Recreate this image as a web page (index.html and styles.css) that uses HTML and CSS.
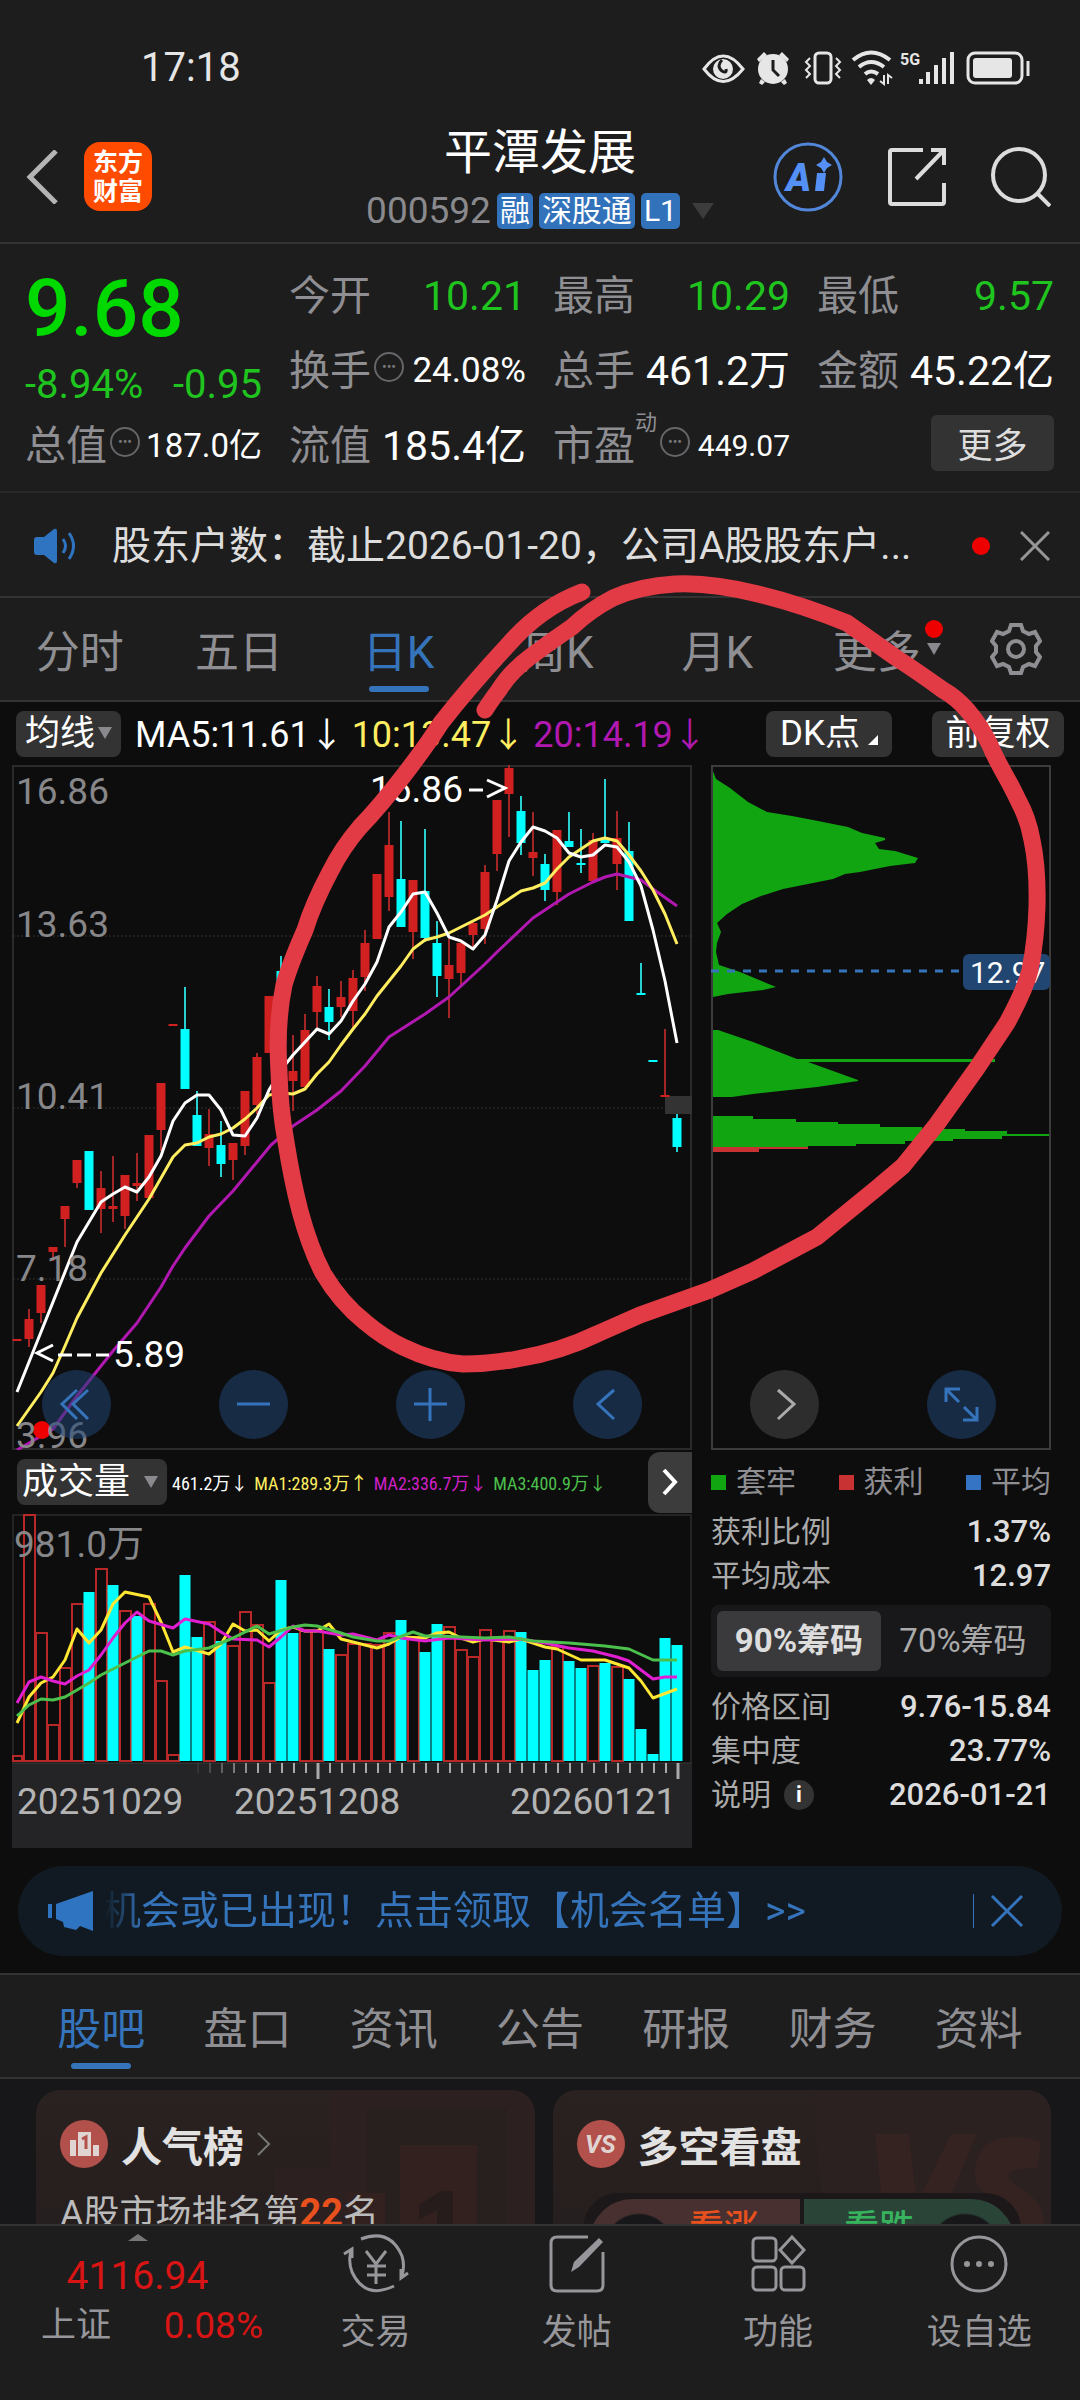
FILE: index.html
```html
<!DOCTYPE html>
<html lang="zh-CN">
<head>
<meta charset="utf-8">
<meta name="viewport" content="width=device-width, initial-scale=1">
<title>平潭发展 000592</title>
<link rel="stylesheet" href="styles.css">
</head>
<body>
<div class="app">
  <div class="status">
    <span class="clock">17:18</span>
    <svg class="status-icons" viewBox="700 46 334 38" width="334" height="38" aria-hidden="true">
      <g fill="none" stroke="#e6e6e6" stroke-width="3">
        <path d="M704 66Q723 40 743 66Q723 91 704 66Z"/>
        <rect x="815" y="50" width="16" height="30" rx="4"/>
        <path d="M810 55l-4 4 4 4-4 4 4 4-4 4M836 55l4 4-4 4 4 4-4 4 4 4" stroke-width="2"/>
        <path d="M853 57Q871 42 890 57M859 64Q871 54 884 64M865 71Q871 66 878 71" stroke-width="4"/>
        <rect x="968" y="50" width="54" height="30" rx="7"/>
        <path d="M1028 58v15" stroke-width="3"/>
        <path d="M884 72v9l-4-3M888 81v-9l4 3" stroke-width="2"/>
      </g>
      <g fill="#e6e6e6">
        <circle cx="723" cy="66" r="10"/>
        <circle cx="773" cy="66" r="15"/>
        <path d="M757 56l7-7 3 3-8 7zM789 56l-7-7-3 3 8 7zM761 76l4 3-3 3-3-2zM785 76l-4 3 3 3 3-2z"/>
        <path d="M871 82l-4-5q4-4 8 0z"/>
        <path d="M919 76h4v5h-4zM926 69h4v12h-4zM934 62h4v19h-4zM942 55h4v26h-4zM950 49h4v32h-4z"/>
        <rect x="973" y="55" width="39" height="20" rx="3"/>
        <text x="900" y="62" font-size="16" font-weight="700">5G</text>
      </g>
      <path d="M773 57v10l6 6M722 57q-6 6 0 11 5 3 4-2" fill="none" stroke="#1d1d1d" stroke-width="3"/>
    </svg>
  </div>

  <header class="header">
    <div class="header-side">
      <button class="icon-btn back" aria-label="返回"><svg viewBox="0 0 32 54" width="32" height="54"><path d="M30 1L4 27l26 26" fill="none" stroke="#b4b4b4" stroke-width="5"/></svg></button>
      <div class="logo"><span>东方</span><span>财富</span></div>
    </div>
    <div class="title">
      <h1>平潭发展</h1>
      <div class="code-row"><span class="code">000592</span><span class="badge">融</span><span class="badge">深股通</span><span class="badge">L1</span><i class="caret-down"></i></div>
    </div>
    <div class="header-side header-right">
      <button class="icon-btn" aria-label="AI"><svg viewBox="2 2 70 70" width="70" height="70"><circle cx="37" cy="37" r="33" fill="none" stroke="#5186d8" stroke-width="3"/><text x="15" y="51" font-size="38" font-weight="900" font-style="italic" fill="#5490f5">A</text><path d="M46 33h9l-2 18h-9zM53 17l3 5 5 3-5 3-3 5-3-5-5-3 5-3z" fill="#5490f5"/></svg></button>
      <button class="icon-btn" aria-label="分享"><svg viewBox="0 0 60 60" width="60" height="60"><path d="M36 3H5q-2 0-2 2v50q0 2 2 2h50q2 0 2-2V36M44 3h13v15M56 4L29 32" fill="none" stroke="#dcdcdc" stroke-width="4"/></svg></button>
      <button class="icon-btn" aria-label="搜索"><svg viewBox="0 0 60 60" width="60" height="60"><circle cx="28" cy="28" r="26" fill="none" stroke="#dcdcdc" stroke-width="4"/><path d="M46 46l13 13" stroke="#dcdcdc" stroke-width="4"/></svg></button>
    </div>
  </header>

  <section class="quote">
    <div class="price-box">
      <strong class="price">9.68</strong>
      <div class="change"><span>-8.94%</span><span>-0.95</span></div>
    </div>
    <div class="cell"><span class="label">今开</span><span class="val green">10.21</span></div>
    <div class="cell"><span class="label">最高</span><span class="val green">10.29</span></div>
    <div class="cell"><span class="label">最低</span><span class="val green">9.57</span></div>
    <div class="cell"><span class="label">换手</span><i class="dots">•••</i><span class="val mid">24.08%</span></div>
    <div class="cell"><span class="label">总手</span><span class="val">461.2万</span></div>
    <div class="cell"><span class="label">金额</span><span class="val">45.22亿</span></div>
    <div class="cell"><span class="label">总值</span><i class="dots">•••</i><span class="val small">187.0亿</span></div>
    <div class="cell"><span class="label">流值</span><span class="val">185.4亿</span></div>
    <div class="cell"><span class="label">市盈</span><sup>动</sup><i class="dots">•••</i><span class="val tiny">449.07</span></div>
    <div class="cell"><button class="more">更多</button></div>
  </section>

  <section class="notice">
    <svg viewBox="0 0 46 36" width="46" height="36" aria-hidden="true"><path d="M1 12q0-3 3-3h7L21 1q3-1 3 2v30q0 3-3 2l-10-8H4q-3 0-3-3z" fill="#2f74c0"/><path d="M30 11q5 7 0 14M36 5q9 13 0 26" fill="none" stroke="#2f74c0" stroke-width="3"/></svg>
    <p>股东户数：截止2026-01-20，公司A股股东户...</p>
    <i class="dot"></i>
    <button class="icon-btn" aria-label="关闭"><svg viewBox="0 0 30 30" width="30" height="30"><path d="M1 1l28 28M29 1L1 29" stroke="#969696" stroke-width="3"/></svg></button>
  </section>

  <nav class="periods">
    <button>分时</button><button>五日</button><button class="active">日K</button><button>周K</button><button>月K</button><button class="period-more">更多<i class="caret-small"></i><i class="dot"></i></button>
    <button class="gear" aria-label="设置"><svg viewBox="0 0 52 52" width="52" height="52"><path d="M21 2h10l2 6 6 3 6-2 5 9-4 5v6l4 5-5 9-6-2-6 3-2 6H21l-2-6-6-3-6 2-5-9 4-5v-6l-4-5 5-9 6 2 6-3z" fill="none" stroke="#8e8e93" stroke-width="4"/><circle cx="26" cy="26" r="8" fill="none" stroke="#8e8e93" stroke-width="4"/></svg></button>
  </nav>

  <main class="market">
    <div class="indicator-bar">
      <button class="chip">均线<i class="caret-small"></i></button>
      <div class="ma-list">
        <span>MA5:11.61<b>↓</b></span>
        <span class="yellow">10:13.47<b>↓</b></span>
        <span class="purple">20:14.19<b>↓</b></span>
      </div>
      <button class="chip dk">DK点<i class="corner"></i></button>
      <button class="chip adjust">前复权</button>
    </div>

    <div class="chart-row">
      <svg class="chart" viewBox="12 765 680 685" role="img" aria-label="日K线图">
        <rect x="13" y="766" width="678" height="683" fill="none" stroke="#2b2b2b" stroke-width="2"/>
        <path d="M13 936H691M13 1108H691M13 1279H691" stroke="#333" stroke-dasharray="2 2"/>
        <rect x="665" y="1096" width="27" height="18" fill="#333"/>
        <path stroke="#a32626" stroke-width="2" fill="none" d="M29 1309V1347M41 1285V1323M53 1248V1261M65 1206V1247M77 1160V1188M101 1171V1233M113 1156V1222M125 1175V1229M137 1153V1201M161 1083V1151M209 1109V1166M233 1143V1180M245 1091V1155M257 1053V1114M293 1035V1111M305 1014V1090M317 976V1028M341 981V1017M353 970V1028M365 930V991M389 812V911M413 880V959M449 939V1018M461 943V985M473 921V947M485 865V944M497 800V871M509 765V837M533 812V876M557 830V905M593 833V883M617 811V890M665 1029V1097"/>
        <path stroke="#d02020" stroke-width="9" fill="none" d="M17 1339V1341M29 1319V1339M41 1285V1313M53 1247V1252M65 1206V1219M77 1160V1183M101 1188V1209M113 1206V1209M125 1175V1216M137 1183V1186M149 1135V1198M161 1083V1130M173 1024V1026M209 1134V1148M233 1143V1160M245 1091V1146M257 1057V1105M269 996V1053M293 1071V1081M305 1030V1087M317 986V1012M341 997V1007M353 978V1011M365 943V977M377 874V939M389 845V897M413 880V932M449 965V979M461 943V973M473 923V935M485 872V929M497 800V854M509 768V794M533 852V858M557 830V892M593 840V881M617 838V864M665 1095V1097"/>
        <path stroke="#26d0d0" stroke-width="2" fill="none" d="M185 987V1029M197 1091V1146M221 1121V1177M281 956V1000M329 989V1040M401 821V927M425 829V942M437 921V997M521 796V855M545 854V901M569 812V847M581 829V873M605 779V843M629 822V921M641 963V995M677 1114V1152"/>
        <path stroke="#00ffff" stroke-width="9" fill="none" d="M89 1151V1210M185 1029V1089M197 1115V1146M221 1145V1164M281 971V1000M329 1007V1022M401 879V927M425 891V938M437 943V976M521 811V843M545 864V890M569 841V847M581 863V865M605 840V843M629 851V921M641 993V995M653 1060V1062M677 1118V1147"/>
        <g fill="none" stroke-width="3" stroke-linejoin="round">
          <path stroke="#b018b0" d="M17 1450L53 1429L77 1396L113 1351L137 1323L149 1305L161 1287L173 1266L185 1248L209 1216L233 1191L257 1162L271 1145L293 1126L317 1110L341 1091L365 1066L389 1037L425 1014L449 997L485 964L497 952L533 918L545 910L569 894L593 882L605 877L617 874L629 877L641 880L653 889L677 906"/>
          <path stroke="#ffee60" d="M17 1426L41 1392L53 1373L65 1346L77 1318L101 1273L125 1235L137 1217L149 1199L161 1178L173 1157L185 1145L197 1143L209 1137L221 1134L233 1128L245 1119L257 1108L269 1095L281 1093L293 1094L305 1089L317 1074L329 1062L341 1045L353 1029L365 1014L377 996L389 981L401 966L413 949L425 940L437 937L449 933L461 927L473 921L485 915L497 907L521 891L533 888L545 883L557 869L569 857L581 849L593 841L605 838L617 841L629 855L641 871L653 890L665 914L677 944"/>
          <path stroke="#ffffff" d="M17 1392L77 1242L101 1202L113 1194L125 1187L137 1192L149 1177L161 1156L173 1121L185 1103L197 1095L209 1095L221 1110L233 1135L245 1136L257 1118L269 1090L281 1070L293 1055L305 1042L317 1029L329 1034L341 1021L353 1001L365 984L377 962L389 927L401 912L413 894L425 892L437 913L449 937L461 941L473 949L485 935L497 900L509 861L521 842L533 827L545 831L557 838L569 853L581 857L593 855L605 845L617 847L629 862L641 886L653 930L665 981L677 1043"/>
        </g>
        <circle cx="42" cy="1430" r="9" fill="#ee0000"/>
        <g class="axis"><text x="16" y="804">16.86</text><text x="16" y="937">13.63</text><text x="16" y="1109">10.41</text><text x="16" y="1281">7.18</text><text x="16" y="1448">3.96</text></g>
        <g class="mark"><text x="113" y="1367">5.89</text><text x="370" y="802">16.86</text></g>
        <path d="M53 1345L37 1353L53 1361M58 1355h14M77 1355h14M96 1355h13M469 790h14M487 780L505 788L487 797" fill="none" stroke="#fff" stroke-width="3"/>
      </svg>
      <svg class="chart" viewBox="711 765 340 685" role="img" aria-label="筹码分布">
        <path fill="#12a512" d="M711 766L716 779L730 788L748 802L767 812L792 816L818 821L848 827L862 833L885 838V840L875 843L879 849L895 851L918 858L915 863L890 866L860 872L845 874L833 879L808 884L783 889L761 896L742 904L727 914L717 923L721 932L717 943L716 952L719 965L740 972L776 987L763 990L728 994L713 997L712 1030H718L753 1042L797 1059H995V1062H808L858 1080V1081L817 1087L753 1094L732 1097H711ZM711 1116H753V1119H796V1122H838V1124H880V1127H922V1129H965V1131H1007V1134H1050V1136H1002V1139H953V1141H905V1144H856V1146H808V1147H711Z"/>
        <path fill="#c83232" d="M711 1147H808V1149H759V1152H711Z"/>
        <rect x="712" y="766" width="338" height="683" fill="none" stroke="#3c3c3c" stroke-width="2"/>
        <path d="M711 971H960" stroke="#3574bb" stroke-width="3" stroke-dasharray="8 8"/>
        <rect x="963" y="954" width="87" height="36" rx="6" fill="#214672"/>
        <text x="970" y="983" font-size="30" fill="#fff">12.97</text>
      </svg>
      <div class="controls">
        <button aria-label="最早"><svg viewBox="0 0 69 69"><path d="M35 20L20 34l15 15M46 20L31 34l15 15"/></svg></button>
        <button aria-label="缩小"><svg viewBox="0 0 69 69"><path d="M18 34h33"/></svg></button>
        <button aria-label="放大"><svg viewBox="0 0 69 69"><path d="M18 34h33M34 18v33"/></svg></button>
        <button aria-label="向左"><svg viewBox="0 0 69 69"><path d="M41 20L25 34l16 15"/></svg></button>
        <button class="muted" aria-label="向右"><svg viewBox="0 0 69 69"><path d="M28 20l16 14-16 15"/></svg></button>
        <button aria-label="全屏"><svg viewBox="0 0 69 69"><path d="M19 32V19h14M20 20l12 12M37 37l13 13M50 37v13H36"/></svg></button>
      </div>
    </div>

    <div class="detail-row">
      <div class="volume">
        <div class="volume-bar">
          <button class="chip">成交量<i class="caret-small"></i></button>
          <div class="vol-values"><span>461.2万↓</span><span class="yellow">MA1:289.3万↑</span><span class="magenta">MA2:336.7万↓</span><span class="lime">MA3:400.9万↓</span></div>
          <button class="next" aria-label="下一个"><svg viewBox="0 0 20 30" width="20" height="30"><path d="M4 3l11 12L4 27" fill="none" stroke="#fff" stroke-width="4"/></svg></button>
        </div>
        <svg class="chart" viewBox="12 1514 680 334" role="img" aria-label="成交量图">
          <defs><linearGradient id="fade" gradientUnits="userSpaceOnUse" x1="190" y1="0" x2="260" y2="0"><stop offset="0" stop-color="#aaa" stop-opacity="0"/><stop offset="1" stop-color="#aaa"/></linearGradient></defs>
          <rect x="12" y="1763" width="680" height="85" fill="#242426"/>
          <rect x="13" y="1515" width="678" height="248" fill="none" stroke="#3a3a3a"/>
          <path fill="none" stroke="#b82828" stroke-width="2" d="M13 1761V1756h9V1761zM24 1761V1515h11V1761zM36 1761V1633h11V1761zM48 1761V1725h11V1761zM60 1761V1668h11V1761zM72 1761V1604h11V1761zM96 1761V1569h11V1761zM120 1761V1611h11V1761zM144 1761V1604h11V1761zM156 1761V1681h11V1761zM168 1761V1755h11V1761zM204 1761V1622h11V1761zM228 1761V1646h11V1761zM240 1761V1612h11V1761zM252 1761V1625h11V1761zM264 1761V1683h11V1761zM300 1761V1631h11V1761zM312 1761V1631h11V1761zM336 1761V1655h11V1761zM348 1761V1644h11V1761zM360 1761V1644h11V1761zM372 1761V1645h11V1761zM384 1761V1633h11V1761zM408 1761V1637h11V1761zM444 1761V1627h11V1761zM456 1761V1650h11V1761zM468 1761V1657h11V1761zM480 1761V1630h11V1761zM492 1761V1637h11V1761zM504 1761V1631h11V1761zM552 1761V1647h11V1761zM588 1761V1666h11V1761zM612 1761V1667h11V1761z"/>
          <path fill="none" stroke="#00ffff" stroke-width="11" d="M89 1761V1592M113 1761V1585M137 1761V1616M185 1761V1575M197 1761V1637M221 1761V1641M281 1761V1580M293 1761V1633M329 1761V1649M401 1761V1620M425 1761V1652M437 1761V1624M521 1761V1632M533 1761V1670M545 1761V1660M569 1761V1661M581 1761V1668M605 1761V1663M629 1761V1679M641 1761V1729M653 1761V1754M665 1761V1638M677 1761V1645"/>
          <g fill="none" stroke-width="3" stroke-linejoin="round">
            <path stroke="#ffe733" d="M17 1723L29 1697L41 1683L53 1677L65 1660L77 1629L89 1643L101 1630L113 1604L125 1592L149 1597L161 1622L173 1652L185 1647L209 1654L221 1644L233 1624L245 1631L257 1630L269 1641L281 1630L293 1627L305 1631L317 1631L329 1624L341 1639L377 1648L389 1644L401 1637L425 1638L437 1633L449 1632L461 1638L473 1642L485 1639L509 1642L521 1639L545 1647L557 1649L581 1660L605 1660L629 1668L641 1681L653 1698L677 1689"/>
            <path stroke="#e01fd0" d="M17 1703L29 1682L41 1677L53 1681L65 1684L77 1676L89 1670L101 1655L113 1638L125 1623L137 1612L149 1621L173 1628L185 1619L209 1624L221 1632L233 1639L257 1640L269 1647L281 1637L293 1626L305 1631L317 1631L341 1635L353 1634L377 1640L389 1635L401 1638L425 1641L449 1638L485 1640L521 1639L545 1643L569 1648L593 1651L617 1657L629 1661L653 1679L665 1677L677 1677"/>
            <path stroke="#4cc04c" d="M17 1716L29 1705L41 1699L53 1700L65 1697L77 1690L89 1683L101 1675L125 1663L149 1651L161 1651L173 1655L185 1651L209 1648L221 1643L233 1638L257 1626L269 1634L293 1627L305 1625L317 1626L341 1633L353 1637L377 1641L389 1641L413 1632L425 1636L437 1636L485 1638L509 1637L533 1641L569 1643L605 1646L629 1649L653 1660L677 1660"/>
          </g>
          <path d="M197 1768H678" stroke="url(#fade)" stroke-width="10" stroke-dasharray="2 10"/>
          <path d="M318 1763V1779M678 1763V1779" stroke="#aaa" stroke-width="3"/>
          <g class="axis"><text x="14" y="1557">981.0万</text></g>
          <g class="dates"><text x="17" y="1814">20251029</text><text x="234" y="1814">20251208</text><text x="510" y="1814">20260121</text></g>
        </svg>
      </div>

      <div class="stats">
        <div class="legend"><span><i class="sw sw-green"></i>套牢</span><span><i class="sw sw-red"></i>获利</span><span><i class="sw sw-blue"></i>平均</span></div>
        <dl>
          <div><dt>获利比例</dt><dd>1.37%</dd></div>
          <div><dt>平均成本</dt><dd>12.97</dd></div>
        </dl>
        <div class="toggle"><button class="on">90%筹码</button><button>70%筹码</button></div>
        <dl>
          <div><dt>价格区间</dt><dd>9.76-15.84</dd></div>
          <div><dt>集中度</dt><dd>23.77%</dd></div>
          <div><dt>说明<i class="info">i</i></dt><dd>2026-01-21</dd></div>
        </dl>
      </div>
    </div>

    <div class="banner">
      <svg viewBox="0 0 46 40" width="46" height="40" aria-hidden="true"><path d="M0 13h4v14H0zM8 13L45 0v40L32 35l-4 4-12-3-1-5-7-3z" fill="#2f74c0"/></svg>
      <a href="#chances">机会或已出现！点击领取【机会名单】&gt;&gt;</a>
      <button class="icon-btn" aria-label="关闭"><svg viewBox="0 0 34 34" width="34" height="34"><path d="M2 2l30 30M32 2L2 32" stroke="#3574bb" stroke-width="3"/></svg></button>
    </div>
  </main>

  <nav class="sections">
    <button class="active">股吧</button><button>盘口</button><button>资讯</button><button>公告</button><button>研报</button><button>财务</button><button>资料</button>
  </nav>

  <section class="feed">
    <article class="card">
      <svg class="card-art" viewBox="0 0 260 160" width="260" height="160" aria-hidden="true"><path d="M55 0h205v160H0V78h55z" fill="#2c2120"/><path d="M92 18h140v142H92z" fill="#281f1f"/><path d="M125 55h77v105h-77zM72 103h38v57H72z" fill="#33211f"/><path d="M144 115l22-14h12v59h-16v-40l-18 10z" fill="#261c1c"/></svg>
      <h2><svg viewBox="0 0 48 48" width="48" height="48" aria-hidden="true"><circle cx="24" cy="24" r="24" fill="#b2504b"/><path d="M10 20h6v16H10zM18 12h13v24H18zM33 25h6v11h-6z" fill="#e0d4d2"/><path d="M22 19l4-2v12" fill="none" stroke="#b2504b" stroke-width="3"/></svg>人气榜<svg class="go" viewBox="0 0 14 24" width="14" height="24" aria-hidden="true"><path d="M1 1l11 11L1 23" fill="none" stroke="#777" stroke-width="2"/></svg></h2>
      <p>A股市场排名第<b>22</b>名</p>
    </article>
    <article class="card">
      <svg class="card-art" viewBox="0 0 260 160" width="260" height="160" aria-hidden="true"><path d="M20 0h240v160H36z" fill="#2b2120"/><path d="M84 44h34l8 70 34-70h26l-50 116h-40z" fill="#352321"/><path d="M250 52q-60-18-66 28-2 20 22 30 26 12-10 26l-40-6v30h84q30-40-14-64-24-18 20-18z" fill="#352321"/></svg>
      <h2><svg viewBox="0 0 48 48" width="48" height="48" aria-hidden="true"><circle cx="24" cy="24" r="24" fill="#b2504b"/><text x="8" y="33" font-size="25" font-weight="700" font-style="italic" fill="#e0d4d2">VS</text></svg>多空看盘</h2>
      <div class="vote"><button class="bull">看涨</button><button class="bear">看跌</button></div>
    </article>
  </section>

  <footer class="tabbar">
    <a class="index" href="#index"><i class="caret-up"></i><span class="index-value">4116.94</span><span class="index-row"><span>上证</span><span class="red">0.08%</span></span></a>
    <a href="#trade"><svg viewBox="0 0 66 60" width="66" height="60"><path d="M18 5Q47-6 59 22q3 10 0 19M51 52Q22 66 9 38 5 27 8 17M1 20l8-5v9M65 39l-7 5v-9M23 17l10 13 10-13M33 30v20M24 32h19M24 41h19"/></svg>交易</a>
    <a href="#post"><svg viewBox="0 0 66 60" width="66" height="60"><path d="M44 3H13q-6 0-6 6v42q0 6 6 6h40q6 0 6-6V18"/><path d="M27 38l3-10L55 4l4 4-24 25z" fill="#96969b" stroke="none"/></svg>发帖</a>
    <a href="#tools"><svg viewBox="0 0 66 60" width="66" height="60"><rect x="8" y="4" width="23" height="23" rx="4"/><rect x="8" y="33" width="23" height="23" rx="4"/><rect x="36" y="33" width="23" height="23" rx="4"/><path d="M47 3l12 13-12 13-12-13z"/></svg>功能</a>
    <a href="#watch"><svg viewBox="0 0 66 60" width="66" height="60"><circle cx="33" cy="30" r="27"/><g fill="#96969b" stroke="none"><circle cx="21" cy="30" r="3"/><circle cx="33" cy="30" r="3"/><circle cx="45" cy="30" r="3"/></g></svg>设自选</a>
  </footer>

  <svg class="scribble" viewBox="0 0 1080 2400" aria-hidden="true"><path d="M582 592Q540 608 508 645Q470 686 441 723C424 750 388 798 360 827Q342 848 330 872Q313 904 305 930Q290 964 284 985Q276 1023 279 1072Q280 1110 286 1142Q292 1180 300 1211Q310 1248 323 1273Q340 1302 365 1322Q384 1338 403 1347Q434 1362 463 1364Q490 1364 517 1359Q560 1352 597 1334L640 1315L710 1290L753 1271L817 1237L877 1188L903 1166L937 1124L977 1068L1007 1023Q1025 990 1030 970Q1036 940 1037 907Q1038 868 1032 840Q1028 818 1018 800C1008 778 998 765 990 745Q970 705 943 690Q918 672 895 657L847 623Q800 604 758 594Q710 582 675 584Q640 586 613 598Q590 610 572 627Q550 642 530 657Q510 672 499 690Q490 702 485 710" fill="none" stroke="#e23b45" stroke-width="17" stroke-linecap="round" stroke-linejoin="round"/></svg>
</div>
</body>
</html>
```
FILE: styles.css
```css
* { box-sizing: border-box; }

body {
  margin: 0;
  background: #1d1d1d;
  color: #fff;
  font-family: Roboto, "Noto Sans CJK SC", sans-serif;
}

h1, h2, p, dl, dd { margin: 0; font-weight: 400; }
i { font-style: normal; }
a { color: inherit; text-decoration: none; }
button { margin: 0; padding: 0; border: 0; background: none; color: inherit; font: inherit; }
svg { display: block; flex: none; }

.app {
  position: relative;
  display: flex;
  flex-direction: column;
  height: 100vh;
  overflow: hidden;
}
.app > * { flex: none; }
.icon-btn { display: block; }
.green { color: #1fc41f; }
.yellow { color: #ffee60; }
.purple { color: #b018b0; }
.magenta { color: #d020c8; }
.lime { color: #4cc04c; }
.red { color: #d81414; }

/* status bar */
.status {
  display: flex;
  align-items: center;
  justify-content: space-between;
  height: 111px;
  padding: 24px 46px 0 141px;
}
.clock { color: #e6e6e6; font-size: 40px; line-height: 48px; }

/* header */
.header {
  display: grid;
  grid-template-columns: 1fr auto 1fr;
  align-items: center;
  height: 133px;
  border-bottom: 2px solid #333;
}
.header-side { display: flex; align-items: center; gap: 26px; padding-left: 26px; }
.header-right { justify-content: flex-end; gap: 44px; padding: 0 29px 0 0; }
.logo {
  display: grid;
  place-content: center;
  width: 68px;
  height: 69px;
  border-radius: 16px;
  background: #ff4b00;
  font-size: 25px;
  font-weight: 700;
  line-height: 29px;
}
.title { padding-top: 8px; text-align: center; }
.title h1 { font-size: 48px; line-height: 60px; }
.code-row { display: flex; align-items: center; justify-content: center; gap: 6px; height: 56px; }
.code { color: #8a8a8e; font-size: 37px; line-height: 40px; }
.badge {
  height: 36px;
  padding: 0 3px;
  border-radius: 5px;
  background: #3272bb;
  font-size: 30px;
  line-height: 35px;
}
.caret-down {
  margin-left: 6px;
  border: 11px solid transparent;
  border-top: 16px solid #3c3c3c;
  border-bottom: 0;
}
.caret-small {
  display: inline-block;
  border: 7px solid transparent;
  border-top: 12px solid #8a8a8e;
  border-bottom: 0;
}

/* quote */
.quote {
  display: grid;
  grid-template-columns: repeat(4, 1fr);
  grid-auto-rows: 75px;
  column-gap: 27px;
  padding: 14px 26px 8px 25px;
  border-bottom: 2px solid #292929;
}
.price-box { grid-row: span 2; }
.price { display: block; color: #00d900; font-size: 80px; font-weight: 500; line-height: 102px; }
.change {
  display: flex;
  justify-content: space-between;
  color: #1fc41f;
  font-size: 40px;
  line-height: 50px;
}
.cell { display: flex; align-items: center; white-space: nowrap; }
.label { color: #8e8e93; font-size: 41px; line-height: 60px; }
.val { margin-left: auto; font-size: 41px; line-height: 60px; }
.val.mid { font-size: 35px; }
.val.small { font-size: 33px; }
.val.tiny { font-size: 30px; }
.cell sup { align-self: flex-start; color: #8e8e93; font-size: 22px; line-height: 30px; }
.dots {
  width: 30px;
  height: 30px;
  margin: -8px 0 0 3px;
  border: 2px solid #66666a;
  border-radius: 50%;
  color: #77777b;
  font-size: 14px;
  line-height: 26px;
  text-align: center;
}
.more {
  width: 123px;
  height: 56px;
  margin: -6px 0 0 auto;
  border-radius: 6px;
  background: #333;
  color: #ddd;
  font-size: 35px;
}

/* notice */
.notice {
  display: flex;
  align-items: center;
  height: 105px;
  padding: 2px 30px 0 33px;
  border-bottom: 2px solid #333;
}
.notice p { flex: 1; margin-left: 33px; color: #ddd; font-size: 39px; line-height: 56px; white-space: nowrap; }
.dot { width: 18px; height: 18px; border-radius: 50%; background: #ee0000; }
.notice .dot { margin-right: 30px; }

/* chart periods */
.periods {
  display: grid;
  grid-template-columns: repeat(6, 4fr) 3fr;
  height: 104px;
  padding-right: 4px;
  border-bottom: 2px solid #333;
  color: #8e8e93;
}
.periods button { position: relative; font-size: 44px; }
.periods .gear { display: grid; place-items: center; }
.active { position: relative; color: #3574bb; }
.active::after {
  content: "";
  position: absolute;
  bottom: 8px;
  left: calc(50% - 30px);
  width: 60px;
  height: 6px;
  border-radius: 3px;
  background: #3574bb;
}
.period-more .caret-small { position: absolute; right: 15px; top: 45px; }
.period-more .dot { position: absolute; right: 13px; top: 22px; }

/* market */
.market { padding-bottom: 17px; background: #0d0d0d; }
.indicator-bar { display: flex; align-items: center; height: 63px; padding: 0 16px; }
.chip {
  height: 46px;
  padding: 0 9px;
  border-radius: 8px;
  background: #333;
  font-size: 35px;
  line-height: 46px;
  white-space: nowrap;
}
.chip .caret-small { margin: 0 0 6px 3px; }
.ma-list {
  display: flex;
  gap: 8px;
  margin-left: 14px;
  font-size: 36px;
  line-height: 46px;
  white-space: nowrap;
}
.ma-list b { font-family: "Noto Sans CJK SC"; font-size: 34px; font-weight: 400; }
.dk { width: 126px; margin: 0 40px 0 auto; padding: 0; }
.adjust { width: 132px; }
.corner {
  display: inline-block;
  margin-left: 8px;
  border: 5px solid #fff;
  border-top-color: transparent;
  border-left-color: transparent;
}
.chart-row, .detail-row {
  display: grid;
  grid-template-columns: 2fr 1fr;
  column-gap: 19px;
  position: relative;
  padding: 0 29px 0 12px;
}
.chart { width: 100%; height: auto; }
.axis text { fill: #87878a; font-size: 37px; }
.mark text { fill: #fff; font-size: 37px; }
.dates text { fill: #b4b4b4; font-size: 37px; }
.controls {
  position: absolute;
  right: 84px;
  bottom: 11px;
  left: 42px;
  display: flex;
  justify-content: space-between;
}
.controls button { width: 69px; height: 69px; border-radius: 50%; background: rgba(32, 70, 116, 0.55); }
.controls path { fill: none; stroke: #3574bb; stroke-width: 3; }
.controls .muted { background: #2d2d2d; }
.controls .muted path { stroke: #aaa; }

.volume-bar { display: flex; align-items: center; height: 64px; padding-left: 5px; }
.volume-bar .chip { width: 150px; padding: 0 5px; text-align: left; font-size: 36px; }
.volume-bar .caret-small { margin-left: 14px; }
.vol-values {
  display: flex;
  flex: 1;
  gap: 6px;
  padding-left: 5px;
  font-family: "Roboto Condensed", "Liberation Sans Narrow", Roboto, "Noto Sans CJK SC", sans-serif;
  font-size: 18px;
  white-space: nowrap;
}
.next {
  display: grid;
  place-items: center;
  width: 44px;
  height: 61px;
  border-radius: 12px 0 0 12px;
  background: #3c3c3c;
}

.stats { padding-top: 10px; font-size: 30px; line-height: 44px; }
.legend { display: flex; justify-content: space-between; margin-bottom: 6px; color: #8e8e93; }
.legend span { display: flex; align-items: center; gap: 10px; }
.sw { width: 15px; height: 15px; }
.sw-green { background: #12a512; }
.sw-red { background: #c83232; }
.sw-blue { background: #3574c4; }
.stats dl > div { display: flex; justify-content: space-between; }
.stats dt { display: flex; align-items: center; color: #aaa; }
.stats dd { color: #ddd; font-size: 31px; font-weight: 500; }
.info {
  width: 30px;
  height: 30px;
  margin-left: 13px;
  border-radius: 50%;
  background: #333;
  color: #fff;
  font-size: 22px;
  font-weight: 700;
  line-height: 30px;
  text-align: center;
}
.toggle {
  display: grid;
  grid-template-columns: 1fr 1fr;
  height: 72px;
  margin: 7px 0 8px;
  padding: 6px;
  border-radius: 8px;
  background: #18181a;
  color: #aaa;
  font-size: 33px;
}
.toggle .on { border-radius: 6px; background: #3a3a3c; color: #ddd; font-weight: 700; }

.banner {
  display: flex;
  align-items: center;
  height: 90px;
  margin: 18px 18px 0;
  padding: 0 38px 0 30px;
  border-radius: 45px;
  background: #111a22;
  color: #3574bb;
}
.banner a {
  flex: 1;
  padding-left: 8px;
  font-size: 39px;
  line-height: 50px;
  white-space: nowrap;
  -webkit-mask-image: linear-gradient(90deg, transparent 10px, #000 50px);
  mask-image: linear-gradient(90deg, transparent 10px, #000 50px);
}
.banner button { padding-left: 16px; border-left: 1px solid #3574bb; }

/* section tabs */
.sections {
  display: grid;
  grid-template-columns: repeat(7, 1fr);
  height: 106px;
  padding: 0 28px;
  border-top: 2px solid #333;
  border-bottom: 2px solid #333;
  color: #8e8e93;
  font-size: 44px;
}

/* feed */
.app > .feed {
  display: grid;
  flex: 1 1 0;
  grid-template-columns: 1fr 1fr;
  gap: 18px;
  min-height: 0;
  padding: 11px 29px 0 36px;
  overflow: hidden;
  background: #17171a;
}
.card {
  position: relative;
  min-width: 0;
  height: 240px;
  padding: 24px;
  overflow: hidden;
  border-radius: 24px;
  background: linear-gradient(#2a2220, #221c1d);
}
.card-art { position: absolute; top: 0; right: 0; }
.card > :not(.card-art) { position: relative; }
.card h2 { display: flex; align-items: center; gap: 13px; height: 60px; color: #e2e2e2; font-size: 41px; font-weight: 700; }
.card p { padding-top: 13px; color: #bbb; font-size: 36px; line-height: 52px; }
.card p b { color: #e8501e; font-size: 38px; }
.vote {
  display: grid;
  grid-template-columns: 1fr 1fr;
  gap: 4px;
  margin: 19px 6px 0;
  padding: 6px;
  border-radius: 48px;
  background: #1c1718;
  font-size: 35px;
  font-weight: 500;
}
.vote button { height: 60px; line-height: 60px; }
.bull {
  border-radius: 44px 0 0 0;
  background: radial-gradient(circle at 50px 50px, #17171a 34px, #47302f 36px);
  color: #e8501e;
}
.bear {
  border-radius: 0 44px 0 0;
  background: radial-gradient(circle at calc(100% - 50px) 50px, #17171a 34px, #2b4438 36px);
  color: #37b35e;
}
.vote .bull { padding-left: 60px; }
.vote .bear { padding-right: 60px; }

/* bottom bar */
.tabbar {
  display: grid;
  grid-template-columns: 275px repeat(4, 1fr);
  height: 176px;
  border-top: 2px solid #333;
  background: #1d1d1d;
  color: #96969b;
  font-size: 35px;
  line-height: 50px;
}
.tabbar a { display: flex; flex-direction: column; align-items: center; padding-top: 8px; }
.tabbar svg { margin-bottom: 14px; fill: none; stroke: #96969b; stroke-width: 3; }
.caret-up { border: 10px solid transparent; border-top: 0; border-bottom: 7px solid #777; }
.index-value { margin-top: 10px; color: #d81414; font-size: 39px; }
.index-row { display: flex; justify-content: space-between; align-self: stretch; padding: 0 12px 0 41px; }
.index-row .red { font-size: 37px; }

/* hand-drawn ring over the charts */
.scribble { position: absolute; top: 0; left: 0; width: 100%; height: auto; pointer-events: none; }
```
